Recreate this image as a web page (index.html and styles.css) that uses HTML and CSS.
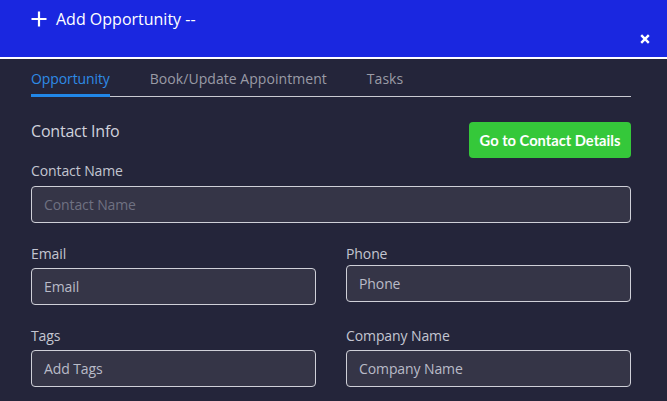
FILE: index.html
```html
<!DOCTYPE html>
<html>
<head>
<meta charset="utf-8">
<link rel="stylesheet" href="styles.css">
</head>
<body>
<div class="modal">
  <header class="modal-header">
    <div class="title">
      <svg class="plus" width="16" height="16" viewBox="0 0 16 16"><path d="M8 0.5v15M0.5 8h15" stroke="#fff" stroke-width="2.2" fill="none"/></svg>
      <span>Add Opportunity --</span>
    </div>
    <button class="close" aria-label="Close">
      <svg width="10" height="10" viewBox="0 0 10 10"><path d="M1.2 1.2l7.6 7.6M8.8 1.2l-7.6 7.6" stroke="#fff" stroke-width="2.4" fill="none"/></svg>
    </button>
  </header>
  <div class="modal-body">
    <nav class="tabs">
      <span class="tab active">Opportunity</span>
      <span class="tab">Book/Update Appointment</span>
      <span class="tab">Tasks</span>
    </nav>
    <div class="section-head">
      <h3 class="section-title">Contact Info</h3>
      <button class="btn-green">Go to Contact Details</button>
    </div>
    <div class="field full">
      <label class="label">Contact Name</label>
      <div class="input placeholder">Contact Name</div>
    </div>
    <div class="grid">
      <div class="field">
        <label class="label">Email</label>
        <div class="input">Email</div>
      </div>
      <div class="field tight">
        <label class="label">Phone</label>
        <div class="input">Phone</div>
      </div>
      <div class="field">
        <label class="label">Tags</label>
        <div class="input">Add Tags</div>
      </div>
      <div class="field">
        <label class="label">Company Name</label>
        <div class="input">Company Name</div>
      </div>
    </div>
  </div>
</div>
</body>
</html>
```
FILE: styles.css
```css
* { box-sizing: border-box; }
html, body {
  margin: 0;
  padding: 0;
  background: #24253a;
  font-family: "Open Sans", "Lato", sans-serif;
  overflow: hidden;
}
.modal { width: 667px; height: 401px; }
.modal-header {
  position: relative;
  height: 59px;
  background: #1a27e0;
  border-bottom: 2px solid #ffffff;
}
.title {
  display: flex;
  align-items: center;
  padding: 5px 0 0 31px;
  color: #ffffff;
  font-size: 16px;
  height: 28px;
  box-sizing: content-box;
}
.plus { margin-right: 9px; }
.close {
  position: absolute;
  right: 17px;
  top: 34px;
  width: 10px;
  height: 10px;
  padding: 0;
  border: 0;
  background: none;
  display: flex;
}
.modal-body { padding: 0 36px 0 31px; }
.tabs {
  display: flex;
  gap: 40px;
  height: 38px;
  border-bottom: 1px solid #c9cad2;
  align-items: stretch;
}
.tab {
  display: flex;
  align-items: center;
  padding-top: 2px;
  font-size: 14px;
  color: #9a9ba6;
  letter-spacing: 0.05px;
}
.tab.active {
  color: #2e8be6;
  border-bottom: 3px solid #2187e8;
  margin-bottom: -1px;
  padding-top: 4px;
  letter-spacing: -0.1px;
}
.section-head {
  display: flex;
  justify-content: space-between;
  align-items: flex-start;
  margin-top: 25px;
  height: 36px;
}
.section-title {
  margin: 0;
  font-weight: 400;
  font-size: 16px;
  line-height: 18px;
  color: #d0d2dc;
  letter-spacing: -0.2px;
}
.btn-green {
  width: 162px;
  height: 36px;
  border: 0;
  border-radius: 4px;
  background: #35c83a;
  color: #ffffff;
  font-family: "Lato", sans-serif;
  font-weight: 700;
  font-size: 14.7px;
  padding: 0;
}
.field { display: flex; flex-direction: column; }
.field.full { margin-top: 4px; }
.label {
  font-size: 14px;
  line-height: 18px;
  color: #c3c5d1;
  margin-bottom: 6px;
  letter-spacing: -0.1px;
}
.input {
  height: 37px;
  border: 1px solid #cfd0d8;
  border-radius: 4px;
  background: #353547;
  color: #b9bbc8;
  font-size: 14px;
  letter-spacing: -0.1px;
  padding-left: 12px;
  display: flex;
  align-items: center;
}
.input.placeholder { color: #6f7182; }
.grid {
  display: grid;
  grid-template-columns: 285px 285px;
  column-gap: 30px;
  row-gap: 22px;
  margin-top: 22px;
}
.grid .label { margin-bottom: 5px; }
.grid .field.tight .label { margin-bottom: 2px; }
```
